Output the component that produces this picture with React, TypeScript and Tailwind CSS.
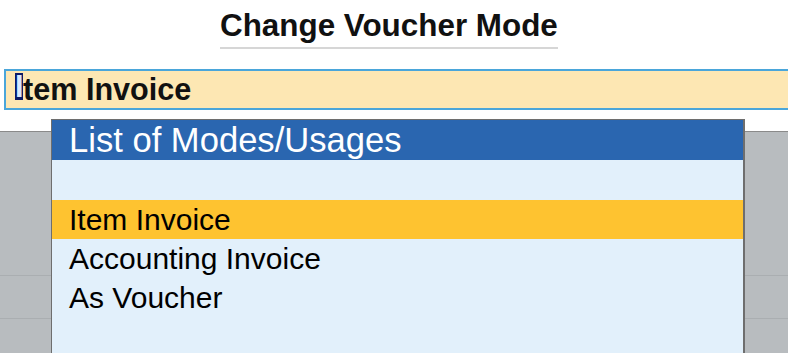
const modes = ["Item Invoice", "Accounting Invoice", "As Voucher"];

export default function App() {
  return (
    <div className="relative h-[353px] w-[788px] overflow-hidden bg-white font-['Liberation_Sans',Arial,sans-serif] text-black">
      <div className="pl-[220px] pt-[8px]">
        <h1 className="inline-block border-b-2 border-[#d6d6d6] pb-[3px] text-[31.4px] font-bold leading-[36px] text-[#111]">
          Change Voucher Mode
        </h1>
      </div>

      <div className="mt-[20px] ml-[4px] h-[41px] border-y-2 border-l-2 border-[#4aa6da] bg-[#fde7b3] pl-[9px] text-[30.6px] font-bold leading-[37px] text-[#111]">
        <span className="inline-block h-[27px] w-[8px] bg-[#0b1a66] text-center align-[3px] leading-[27px] text-[#d8e8ff]">
          I
        </span>
        tem Invoice
      </div>

      <div className="mt-[21px] border-t border-[#8a8a8a] bg-[#b8bcbf]">
        <div className="h-[144px] border-b border-[#aaaeb1]" />
        <div className="h-[43px] border-b border-[#aaaeb1]" />
        <div className="h-[40px]" />
      </div>

      <div className="absolute left-[51px] top-[119px] bottom-0 w-[694px] border-t border-l border-r-2 border-[#6e6e6e] bg-[#e2f0fb]">
        <div className="h-[40px] bg-[#2a66b0] pl-[17px] text-[34.6px] leading-[40px] text-white">
          List of Modes/Usages
        </div>
        <div className="h-[40px]" />
        {modes.map((mode, i) => (
          <div
            key={mode}
            className={
              i === 0
                ? "h-[39px] bg-[#fec330] pl-[17px] text-[30px] leading-[39px]"
                : "h-[39px] pl-[17px] text-[30px] leading-[39px]"
            }
          >
            {mode}
          </div>
        ))}
      </div>
    </div>
  );
}
